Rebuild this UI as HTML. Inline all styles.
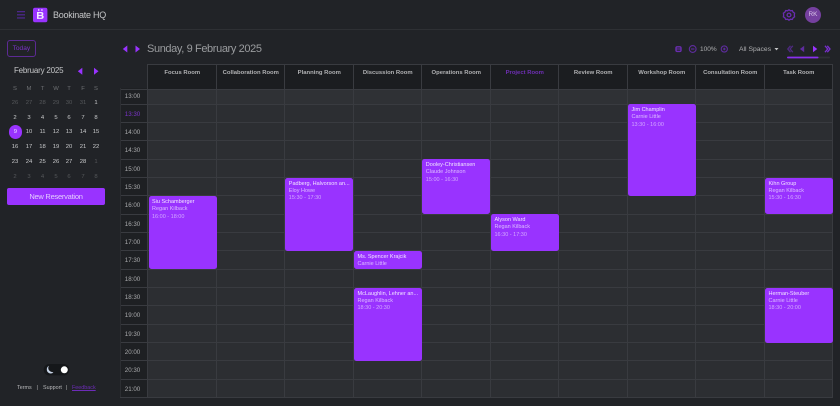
<!DOCTYPE html>
<html lang="en">
<head>
<meta charset="utf-8">
<title>Bookinate HQ</title>
<style>
html,body{margin:0;padding:0;background:#212327;}
body{width:840px;height:406px;position:relative;overflow:hidden;font-family:"Liberation Sans",sans-serif;color:#c9cacc;}
#app{position:absolute;left:0;top:0;width:840px;height:406px;background:#212327;filter:blur(.35px);overflow:hidden;}
#app div{position:absolute;white-space:nowrap;}
.topline{left:0;top:28.5px;width:840px;height:1.5px;background:#2e3034;}
.title{left:53px;top:9.5px;font-size:9px;line-height:11px;color:#c4c5c7;letter-spacing:-.25px;}
.today{left:6.7px;top:40px;width:27.4px;height:15.2px;border:1.2px solid #5c2a94;border-radius:3px;color:#7a33c8;font-size:6.6px;line-height:15.4px;text-align:center;}
.month{left:14px;top:66.3px;font-size:8px;line-height:10px;color:#c4c5c7;letter-spacing:-.2px;}
.date{left:147px;top:42px;font-size:11px;line-height:14px;color:#9a9c9f;letter-spacing:-.38px;}
.d{width:14px;text-align:center;font-size:5.9px;line-height:8px;color:#c8c9cb;}
.w{color:#6f7174;}
.o{color:#55575a;}
.sel{left:8.6px;top:125.3px;width:13.6px;height:13.6px;border-radius:50%;background:#9933ff;}
.newres{left:7px;top:187.7px;width:98px;height:17px;border-radius:2px;background:#9933ff;color:#e4ccff;font-size:7.5px;line-height:17px;text-align:center;letter-spacing:-.25px;}
.foot{top:383.5px;font-size:5.4px;line-height:8px;color:#b8b9bb;}
.grid{left:120px;top:88px;width:712.5px;height:309px;background:#2c2e32;}
.row1{left:148px;top:88.5px;width:684.5px;height:15px;background:#2f3135;}
.timecol{left:120px;top:88px;width:27.5px;height:309px;background:#1e2023;}
.head{left:147.5px;top:64px;width:685px;height:24.5px;background:#1b1d20;}
.v{top:64px;width:1px;height:333px;background:#393b40;}
.h{left:120px;width:712.5px;height:1px;background:#393b40;}
.rm{top:69px;width:68.5px;text-align:center;font-size:5.9px;font-weight:bold;line-height:9px;color:#b0b1b3;}
.t{left:119px;width:27px;text-align:center;font-size:6.2px;line-height:9px;color:#a9aaac;}
.ev{background:#9933ff;border-radius:2.5px;overflow:hidden;}
.ev div{left:3.5px;font-size:5.5px;line-height:7.4px;}
.a{top:3px;color:#f2e6ff;}
.b{top:10.4px;color:#dcbcff;}
.c{top:17.8px;color:#d3a8ff;}
</style>
</head>
<body>
<div id="app">
<div class="topline"></div>
<svg style="position:absolute;left:0;top:0" width="840" height="80" viewBox="0 0 840 80">
  <g stroke="#52289a" stroke-width="1.1"><path d="M17 11.7h8M17 14.8h8M17 17.9h8"/></g>
  <rect x="33" y="7.8" width="14.4" height="14.4" rx="2" fill="#9933ff"/>
  <g fill="#f3e8ff"><rect x="38" y="9.3" width="1.4" height="1.4"/><rect x="41.2" y="9.3" width="1.4" height="1.4"/>
  <path fill-rule="evenodd" d="M37 12h4.2c1.4 0 2.2.8 2.2 1.9 0 .7-.4 1.2-.9 1.4.8.2 1.2.8 1.2 1.6 0 1.2-.9 2-2.3 2H37zM38.6 13.3v1.6h2.2c.6 0 .9-.3.9-.8s-.3-.8-.9-.8zM38.6 16.1v1.6h2.4c.6 0 .9-.3.9-.8s-.3-.8-.9-.8z"/></g>
  <g fill="none" stroke="#6a2db0" stroke-width="1.3"><path d="M789 9.8l1.5 1 1.8-.2.8 1.6 1.5 1-.3 1.8.3 1.8-1.5 1-.8 1.6-1.8-.2-1.5 1-1.5-1-1.8.2-.8-1.6-1.5-1 .3-1.8-.3-1.8 1.5-1 .8-1.6 1.8.2z"/><circle cx="789" cy="15" r="1.9"/></g>
  <circle cx="813" cy="15" r="8" fill="#75409f"/>
  <g fill="#9933ff"><path d="M127.3 45.5v7l-4.5-3.5z"/><path d="M135.5 45.5v7l4.5-3.5z"/><path d="M82.3 67.7v7l-4.5-3.5z"/><path d="M94 67.7v7l4.5-3.5z"/><path d="M817.3 49l-4.3-3.2v6.4z"/></g>
  <path d="M804.2 45.8v6.4l-4.3-3.2z" fill="#5e2c9e"/>
  <g fill="none" stroke="#4f2a82" stroke-width="1.3"><path d="M790.5 45.8l-2.7 3.2 2.7 3.2M792.8 45.8l-2.7 3.2 2.7 3.2"/></g>
  <g fill="none" stroke="#7a2fd0" stroke-width="1.3"><path d="M825 45.8l2.7 3.2-2.7 3.2M827.3 45.8l2.7 3.2-2.7 3.2"/></g>
  <g fill="none" stroke="#5e2c9e" stroke-width="1.1"><circle cx="692.7" cy="49" r="3.4"/><path d="M691 49h3.4"/><circle cx="724.3" cy="49" r="3.1"/><path d="M723 49h2.6M724.3 47.7v2.6"/></g>
  <rect x="676" y="46.8" width="5" height="4.6" rx="1.2" fill="none" stroke="#6a2db0" stroke-width="1.4"/><path d="M675.5 49h6" stroke="#6a2db0"/>
  <path d="M774.5 48l2 2.4 2-2.4z" fill="#c4c5c7"/>
  <rect x="787" y="56.6" width="43" height="1.8" fill="#2f3135" rx=".9"/>
  <rect x="787" y="56.6" width="31.5" height="1.8" fill="#8a2fee" rx=".9"/>
</svg>
<div class="title">Bookinate HQ</div>
<div style="left:805px;top:11px;width:16px;text-align:center;font-size:6.4px;line-height:8px;color:#d8c4e8">RK</div>
<div class="today">Today</div>
<div class="month">February 2025</div>
<div class="date">Sunday, 9 February 2025</div>
<div style="left:700px;top:45px;font-size:6.5px;line-height:9px;color:#aeafb1">100%</div>
<div style="left:739px;top:45px;font-size:6.8px;line-height:9px;color:#aeafb1">All Spaces</div>

<div class="d w" style="left:8px;top:85.3px">S</div><div class="d w" style="left:22px;top:85.3px">M</div><div class="d w" style="left:35.5px;top:85.3px">T</div><div class="d w" style="left:49px;top:85.3px">W</div><div class="d w" style="left:62px;top:85.3px">T</div><div class="d w" style="left:76px;top:85.3px">F</div><div class="d w" style="left:89px;top:85.3px">S</div>
<div class="d o" style="left:8px;top:99.3px">26</div><div class="d o" style="left:22px;top:99.3px">27</div><div class="d o" style="left:35.5px;top:99.3px">28</div><div class="d o" style="left:49px;top:99.3px">29</div><div class="d o" style="left:62px;top:99.3px">30</div><div class="d o" style="left:76px;top:99.3px">31</div><div class="d" style="left:89px;top:99.3px">1</div>
<div class="d" style="left:8px;top:113.7px">2</div><div class="d" style="left:22px;top:113.7px">3</div><div class="d" style="left:35.5px;top:113.7px">4</div><div class="d" style="left:49px;top:113.7px">5</div><div class="d" style="left:62px;top:113.7px">6</div><div class="d" style="left:76px;top:113.7px">7</div><div class="d" style="left:89px;top:113.7px">8</div>
<div class="sel"></div>
<div class="d" style="left:8.4px;top:128.2px;color:#f0e4ff">9</div><div class="d" style="left:22px;top:128.2px">10</div><div class="d" style="left:35.5px;top:128.2px">11</div><div class="d" style="left:49px;top:128.2px">12</div><div class="d" style="left:62px;top:128.2px">13</div><div class="d" style="left:76px;top:128.2px">14</div><div class="d" style="left:89px;top:128.2px">15</div>
<div class="d" style="left:8px;top:143px">16</div><div class="d" style="left:22px;top:143px">17</div><div class="d" style="left:35.5px;top:143px">18</div><div class="d" style="left:49px;top:143px">19</div><div class="d" style="left:62px;top:143px">20</div><div class="d" style="left:76px;top:143px">21</div><div class="d" style="left:89px;top:143px">22</div>
<div class="d" style="left:8px;top:158px">23</div><div class="d" style="left:22px;top:158px">24</div><div class="d" style="left:35.5px;top:158px">25</div><div class="d" style="left:49px;top:158px">26</div><div class="d" style="left:62px;top:158px">27</div><div class="d" style="left:76px;top:158px">28</div><div class="d o" style="left:89px;top:158px">1</div>
<div class="d o" style="left:8px;top:172.7px">2</div><div class="d o" style="left:22px;top:172.7px">3</div><div class="d o" style="left:35.5px;top:172.7px">4</div><div class="d o" style="left:49px;top:172.7px">5</div><div class="d o" style="left:62px;top:172.7px">6</div><div class="d o" style="left:76px;top:172.7px">7</div><div class="d o" style="left:89px;top:172.7px">8</div>
<div class="newres">New Reservation</div>

<svg style="position:absolute;left:42px;top:362px" width="30" height="16" viewBox="0 0 30 16">
  <rect x="1.7" y="2" width="25.6" height="11.4" rx="5.7" fill="#15171a"/>
  <path d="M7 3.8c-1.8 2.6-.3 6.4 4.4 6.4-1.6 2.2-6.3 1.6-6.6-2.4C4.7 5.8 5.6 4.4 7 3.8z" fill="#c7d3e6"/>
  <circle cx="22.3" cy="7.8" r="3.5" fill="#fff"/>
</svg>
<div class="foot" style="left:17px">Terms</div>
<div class="foot" style="left:36.5px">|</div>
<div class="foot" style="left:43px">Support</div>
<div class="foot" style="left:66px">|</div>
<div class="foot" style="left:72px;color:#6d2cb8;text-decoration:underline">Feedback</div>

<div class="grid"></div>
<div class="row1"></div>
<div class="timecol"></div>
<div class="head"></div>

<div class="h" style="top:88.5px"></div><div class="h" style="top:103.5px"></div><div class="h" style="top:122px"></div><div class="h" style="top:140px"></div><div class="h" style="top:158.5px"></div><div class="h" style="top:177px"></div><div class="h" style="top:195px"></div><div class="h" style="top:213.5px"></div><div class="h" style="top:232px"></div><div class="h" style="top:250px"></div><div class="h" style="top:268.5px"></div><div class="h" style="top:287px"></div><div class="h" style="top:305px"></div><div class="h" style="top:323.5px"></div><div class="h" style="top:342px"></div><div class="h" style="top:360px"></div><div class="h" style="top:378.5px"></div><div class="h" style="top:396.5px"></div>
<div class="h" style="top:64px;left:147.5px;width:685px"></div>
<div class="v" style="left:119.5px;top:88px;height:309px;background:#2c2e32"></div><div class="v" style="left:147.2px"></div><div class="v" style="left:215.7px"></div><div class="v" style="left:284.1px"></div><div class="v" style="left:352.6px"></div><div class="v" style="left:421px"></div><div class="v" style="left:489.5px"></div><div class="v" style="left:558px"></div><div class="v" style="left:626.6px"></div><div class="v" style="left:695.3px"></div><div class="v" style="left:763.6px"></div><div class="v" style="left:832px"></div>

<div class="rm" style="left:148px">Focus Room</div>
<div class="rm" style="left:216.5px">Collaboration Room</div>
<div class="rm" style="left:285px">Planning Room</div>
<div class="rm" style="left:353.5px">Discussion Room</div>
<div class="rm" style="left:422px">Operations Room</div>
<div class="rm" style="left:490.5px;color:#6f2fb5">Project Room</div>
<div class="rm" style="left:559px">Review Room</div>
<div class="rm" style="left:627.5px">Workshop Room</div>
<div class="rm" style="left:696px">Consultation Room</div>
<div class="rm" style="left:764.5px">Task Room</div>

<div class="t" style="top:91.5px">13:00</div>
<div class="t" style="top:109.8px;color:#7a33c8">13:30</div>
<div class="t" style="top:128.1px">14:00</div>
<div class="t" style="top:146.4px">14:30</div>
<div class="t" style="top:164.7px">15:00</div>
<div class="t" style="top:183px">15:30</div>
<div class="t" style="top:201.4px">16:00</div>
<div class="t" style="top:219.7px">16:30</div>
<div class="t" style="top:238px">17:00</div>
<div class="t" style="top:256.3px">17:30</div>
<div class="t" style="top:274.6px">18:00</div>
<div class="t" style="top:292.9px">18:30</div>
<div class="t" style="top:311.2px">19:00</div>
<div class="t" style="top:329.5px">19:30</div>
<div class="t" style="top:347.8px">20:00</div>
<div class="t" style="top:366.1px">20:30</div>
<div class="t" style="top:384.5px">21:00</div>

<div class="ev" style="left:148.5px;top:196px;height:72.5px;width:68px"><div class="a">Siu Schamberger</div><div class="b">Regan Kilback</div><div class="c">16:00 - 18:00</div></div>
<div class="ev" style="left:285.3px;top:177.5px;height:73px;width:68px"><div class="a">Padberg, Halvorson an...</div><div class="b">Eloy Howe</div><div class="c">15:30 - 17:30</div></div>
<div class="ev" style="left:354px;top:251px;height:18px;width:68px"><div class="a">Ms. Spencer Krajcik</div><div class="b">Carnie Little</div></div>
<div class="ev" style="left:354px;top:287.5px;height:73px;width:68px"><div class="a">McLaughlin, Lehner an...</div><div class="b">Regan Kilback</div><div class="c">18:30 - 20:30</div></div>
<div class="ev" style="left:422.3px;top:159px;height:55px;width:68px"><div class="a">Dooley-Christiansen</div><div class="b">Claude Johnson</div><div class="c">15:00 - 16:30</div></div>
<div class="ev" style="left:491px;top:214px;height:36.5px;width:68px"><div class="a">Alyson Ward</div><div class="b">Regan Kilback</div><div class="c">16:30 - 17:30</div></div>
<div class="ev" style="left:628px;top:104px;height:91.5px;width:68px"><div class="a">Jim Champlin</div><div class="b">Carnie Little</div><div class="c">13:30 - 16:00</div></div>
<div class="ev" style="left:765px;top:177.5px;height:36.5px;width:68px"><div class="a">Kihn Group</div><div class="b">Regan Kilback</div><div class="c">15:30 - 16:30</div></div>
<div class="ev" style="left:765px;top:287.5px;height:55px;width:68px"><div class="a">Herman-Steuber</div><div class="b">Carnie Little</div><div class="c">18:30 - 20:00</div></div>
</div>
</body>
</html>
